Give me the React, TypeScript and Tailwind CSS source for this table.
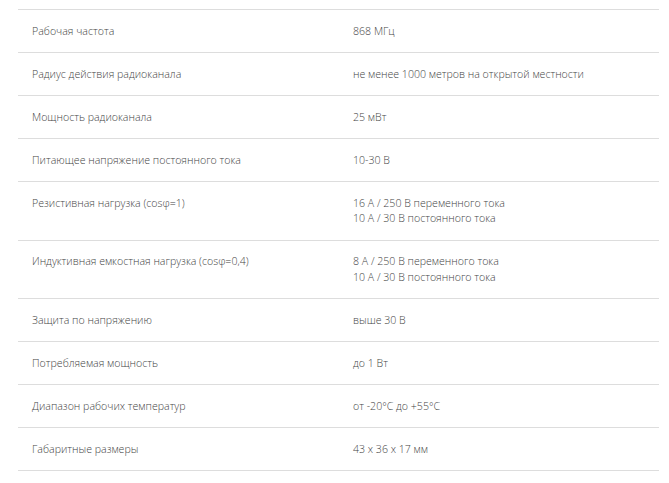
const rows: [string, string[]][] = [
  ["Рабочая частота", ["868 МГц"]],
  ["Радиус действия радиоканала", ["не менее 1000 метров на открытой местности"]],
  ["Мощность радиоканала", ["25 мВт"]],
  ["Питающее напряжение постоянного тока", ["10-30 В"]],
  ["Резистивная нагрузка (cosφ=1)", ["16 А / 250 В переменного тока", "10 А / 30 В постоянного тока"]],
  ["Индуктивная емкостная нагрузка (cosφ=0,4)", ["8 А / 250 В переменного тока", "10 А / 30 В постоянного тока"]],
  ["Защита по напряжению", ["выше 30 В"]],
  ["Потребляемая мощность", ["до 1 Вт"]],
  ["Диапазон рабочих температур", ["от -20°C до +55°C"]],
  ["Габаритные размеры", ["43 x 36 x 17 мм"]],
];

export default function App() {
  return (
    <div className="h-[483px] w-[669px] bg-white pt-[9px] pl-[18px] font-['Open_Sans',sans-serif] text-[10.6px] font-light leading-[15.5px] text-[#444]">
      <div className="w-[641px] border-t border-[#ddd]">
        {rows.map(([label, values]) => (
          <div key={label} className="grid grid-cols-[322px_1fr] border-b border-[#ddd]">
            <div className="pt-[13.5px] pb-[13px] pl-[14px]">{label}</div>
            <div className="pt-[13.5px] pb-[13px] pl-[13px]">
              {values.map((v) => (
                <div key={v}>{v}</div>
              ))}
            </div>
          </div>
        ))}
      </div>
    </div>
  );
}
